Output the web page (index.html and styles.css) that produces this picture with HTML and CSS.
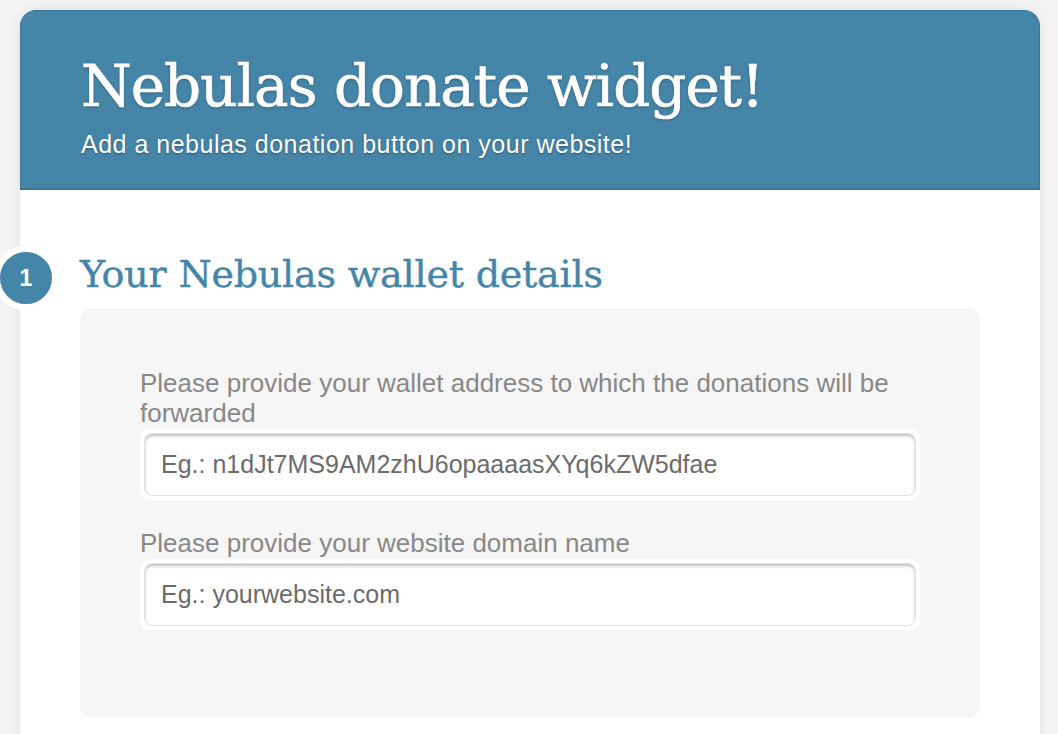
FILE: index.html
```html
<!DOCTYPE html>
<html lang="en">
<head>
    <meta charset="UTF-8">
    <meta name="viewport" content="width=device-width, initial-scale=1.0">
    <title>Nebulas donate widget</title>
    <link rel="stylesheet" href="styles.css">
</head>
<body>
    <div class="card">
        <header class="header">
            <h1>Nebulas donate widget!</h1>
            <p class="subtitle">Add a nebulas donation button on your website!</p>
        </header>

        <section class="step">
            <span class="step-number">1</span>
            <h2>Your Nebulas wallet details</h2>

            <div class="panel">
                <!-- Wallet address -->
                <div class="form-group">
                    <label for="wallet">Please provide your wallet address to which the donations will be forwarded</label>
                    <div class="field">
                        <input type="text" id="wallet" placeholder="Eg.: n1dJt7MS9AM2zhU6opaaaasXYq6kZW5dfae">
                    </div>
                </div>

                <!-- Domain -->
                <div class="form-group">
                    <label for="domain">Please provide your website domain name</label>
                    <div class="field">
                        <input type="text" id="domain" placeholder="Eg.: yourwebsite.com">
                    </div>
                </div>
            </div>
        </section>
    </div>
</body>
</html>
```

FILE: styles.css
```css
* {
    margin: 0;
    padding: 0;
    box-sizing: border-box;
}

body {
    background: #f4f4f4;
    font-family: 'Liberation Sans', Arial, sans-serif;
    height: 734px;
    overflow: hidden;
}

.card {
    width: 1020px;
    margin: 10px 0 0 20px;
    min-height: 800px;
    background: #fff;
    border-radius: 16px 16px 0 0;
    box-shadow: 0 0 14px rgba(0, 0, 0, 0.08);
}

.header {
    height: 180px;
    padding: 40px 60px 0;
    background: #4585a8;
    border: 1px solid #3c7797;
    border-bottom: 2px solid #3c7594;
    border-radius: 16px 16px 0 0;
    color: #fff;
}

.header h1 {
    font-family: 'DejaVu Serif', serif;
    font-weight: normal;
    font-size: 58px;
    line-height: 70px;
    letter-spacing: -1px;
    -webkit-text-stroke: 0.7px #fff;
    text-shadow: 0 1px 3px rgba(0, 0, 0, 0.3);
}

.subtitle {
    margin-top: 8px;
    font-size: 25px;
    line-height: 30px;
    letter-spacing: 0.5px;
    text-shadow: 0 1px 2px rgba(0, 0, 0, 0.35);
}

.step {
    position: relative;
    padding: 54px 60px 0;
}

.step-number {
    position: absolute;
    left: -26px;
    top: 56px;
    width: 64px;
    height: 64px;
    border: 6px solid #fff;
    border-radius: 50%;
    background: #4585a8;
    color: #fff;
    font-weight: bold;
    font-size: 23px;
    display: flex;
    align-items: center;
    justify-content: center;
}

.step h2 {
    font-family: 'DejaVu Serif', serif;
    font-weight: normal;
    font-size: 38px;
    line-height: 60px;
    color: #4585a8;
    letter-spacing: -0.2px;
    -webkit-text-stroke: 0.4px #4585a8;
    margin-bottom: 4px;
}

.panel {
    padding: 60px 60px 60px;
    background: #f6f6f6;
    border-radius: 12px;
}

.form-group {
    margin-bottom: 28px;
}

.form-group:last-child {
    margin-bottom: 28px;
}

label {
    display: block;
    color: #888;
    font-size: 26px;
    line-height: 30px;
}

.field {
    margin-top: 1px;
    padding: 4px;
    background: #fff;
    border-radius: 10px;
}

input {
    width: 100%;
    height: 63px;
    padding: 0 16px;
    border: 1px solid #e2e2e2;
    border-radius: 8px;
    box-shadow: inset 0 2px 3px rgba(0, 0, 0, 0.25);
    font-family: 'Liberation Sans', Arial, sans-serif;
    font-size: 25px;
    color: #666;
    outline: none;
}

input::placeholder {
    color: #6b6b6b;
}
```
